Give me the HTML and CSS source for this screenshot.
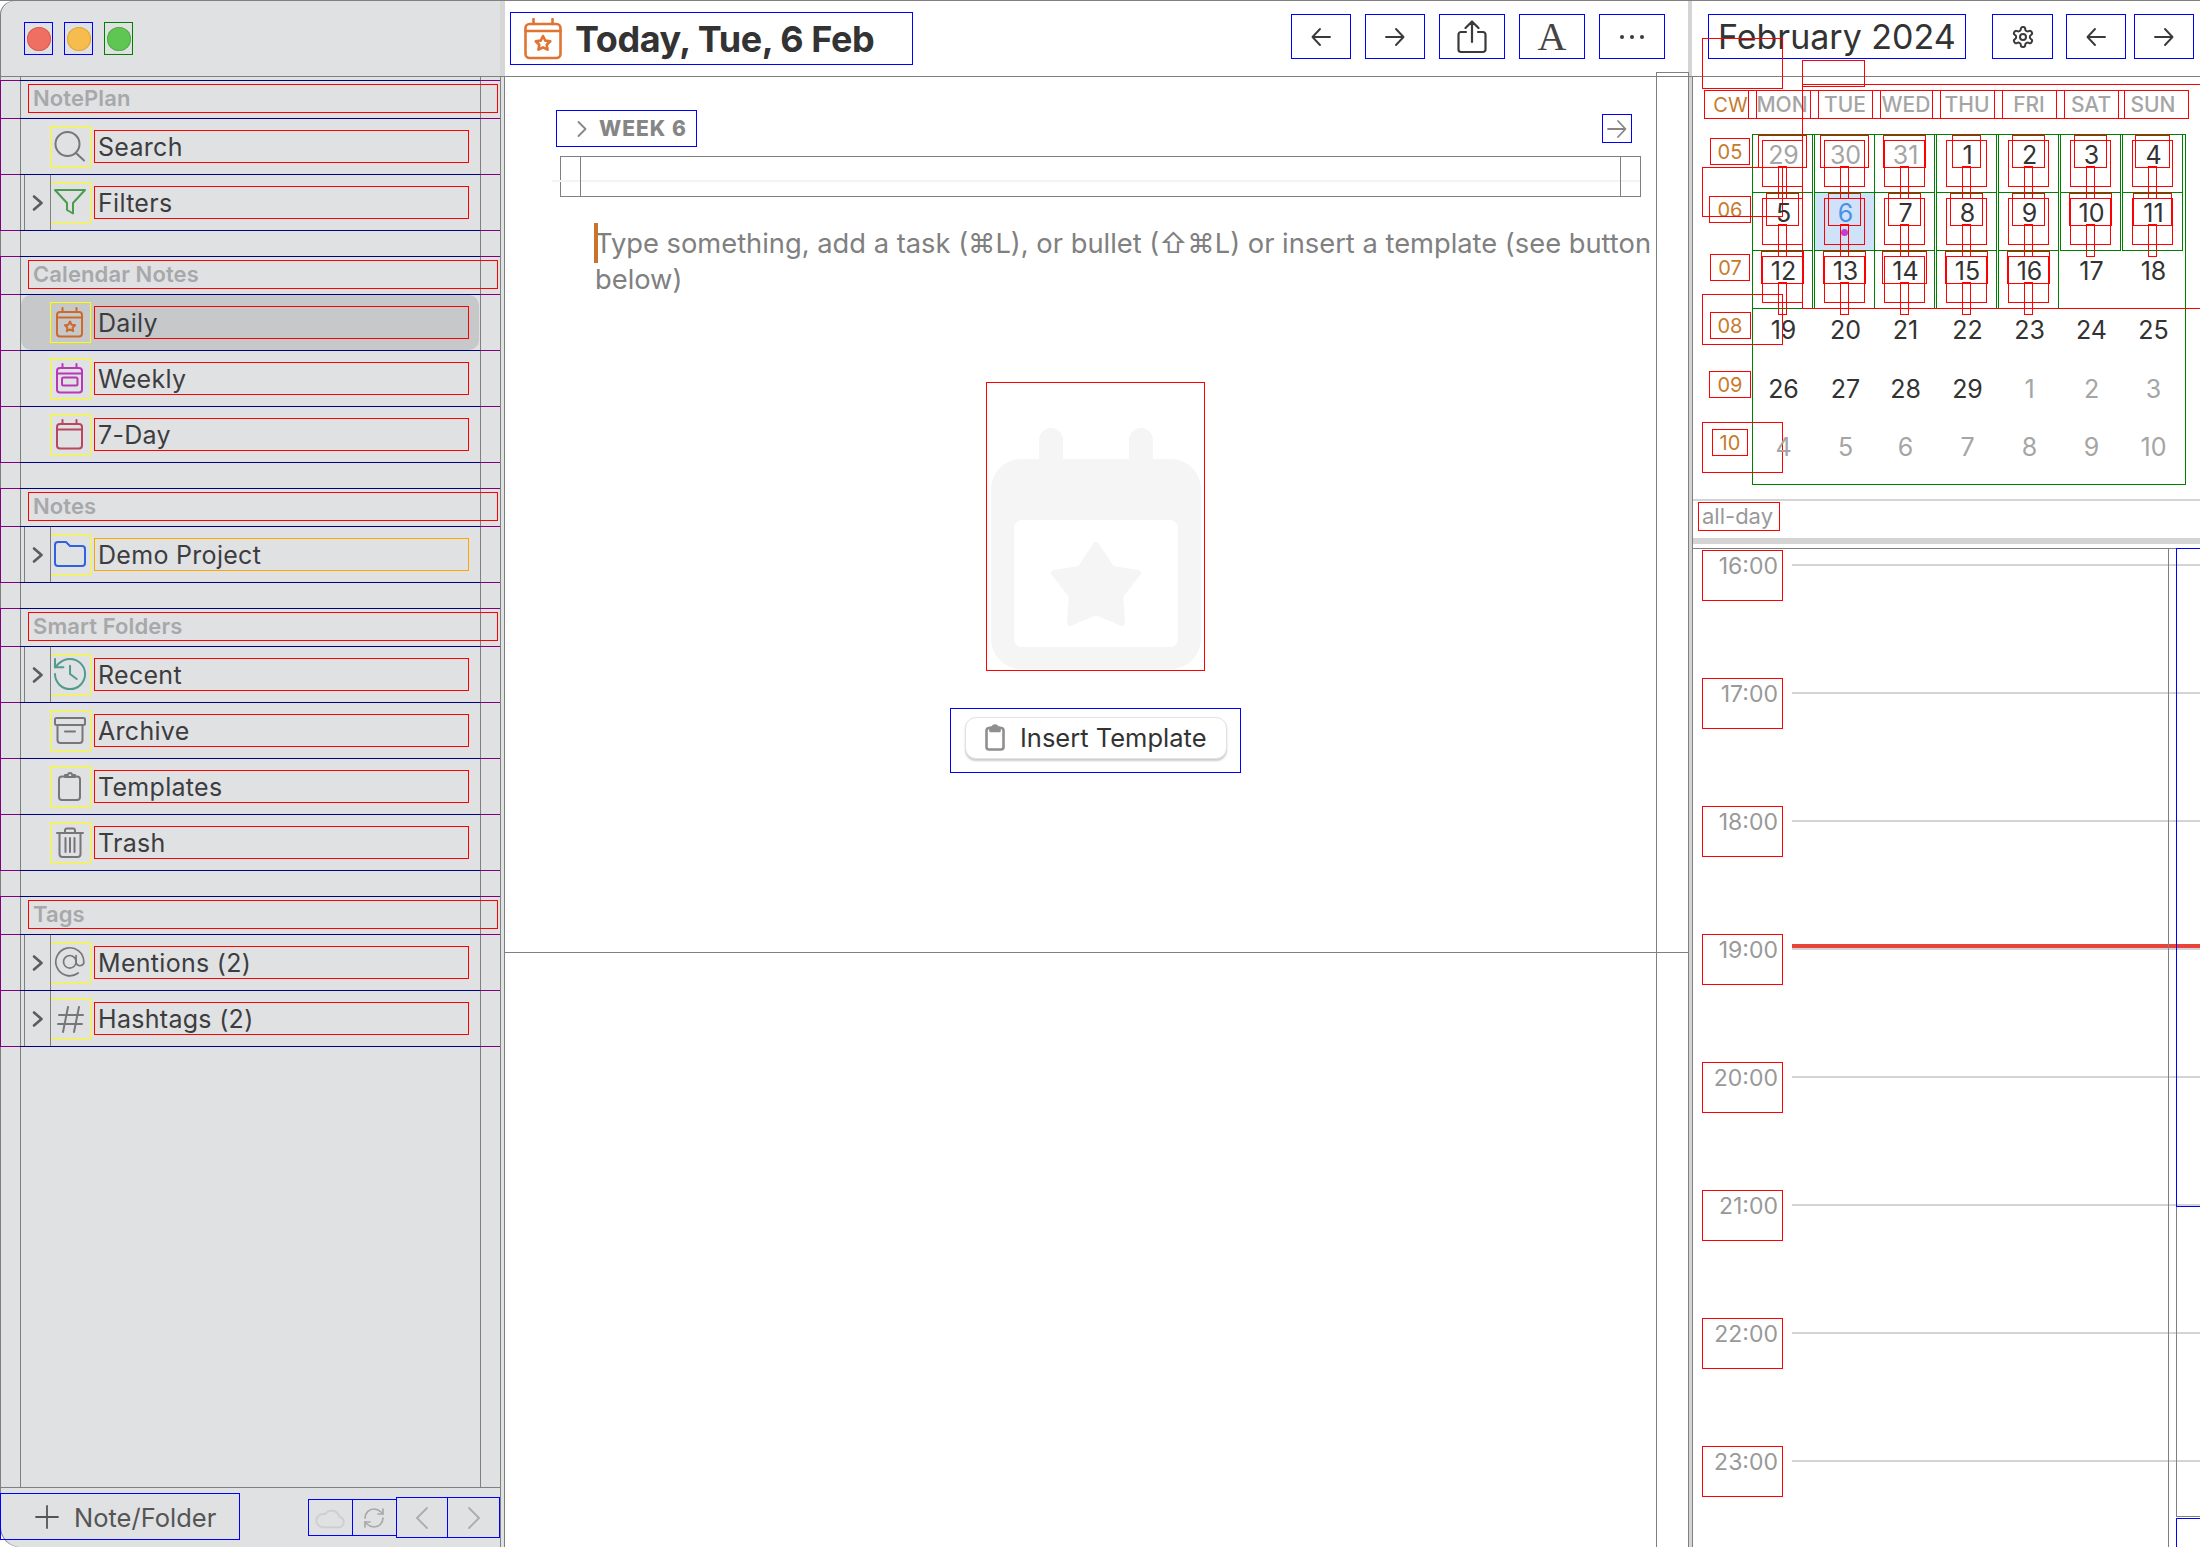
FILE: index.html
```html
<!DOCTYPE html>
<html lang="en">
<head>
  <meta charset="UTF-8">
  <title>NotePlan</title>
  <link rel="stylesheet" href="styles.css">
</head>
<body>
<div class="app">

  <!-- left column -->
  <aside class="sidebar">
    <div class="titlebar">
      <span class="light bb"><b class="red"></b></span>
      <span class="light bb"><b class="amber"></b></span>
      <span class="light gb"><b class="green"></b></span>
    </div>

    <div class="list">
      <div class="row sec"><div class="row-in"><div class="sec-label">NotePlan</div></div></div>
      <div class="row"><div class="row-in"><div class="row-body">
        <span class="chev off"></span>
        <span class="ic"><svg viewBox="0 0 41 41" class="grey"><circle cx="17.5" cy="18" r="12"/><path d="M26 27l8 7.5"/></svg></span>
        <span class="label">Search</span>
      </div></div></div>
      <div class="row"><div class="row-in"><div class="row-body">
        <span class="chev"><svg viewBox="0 0 12 16"><path d="M2 1.5L9.5 8L2 14.5"/></svg></span>
        <span class="ic"><svg viewBox="0 0 41 41" class="c-green"><path d="M5 8H35L23 21V31.5L17 28V21Z"/></svg></span>
        <span class="label">Filters</span>
      </div></div></div>
      <div class="gap"></div>

      <div class="row sec"><div class="row-in"><div class="sec-label">Calendar Notes</div></div></div>
      <div class="row"><div class="row-in"><div class="row-body selected">
        <span class="chev off"></span>
        <span class="ic"><svg viewBox="0 0 41 41" class="c-orange"><rect x="7" y="10" width="25" height="24.5" rx="3"/><path d="M7 15.5H32M12.5 6V10M26.5 6V10"/><path d="M20 19.5l1.6 3.2 3.5.5-2.5 2.4.6 3.5-3.2-1.7-3.2 1.7.6-3.5-2.5-2.4 3.5-.5z"/></svg></span>
        <span class="label">Daily</span>
      </div></div></div>
      <div class="row"><div class="row-in"><div class="row-body">
        <span class="chev off"></span>
        <span class="ic"><svg viewBox="0 0 41 41" class="c-purple"><rect x="7" y="10" width="25" height="24.5" rx="3"/><path d="M7 15.5H32M12.5 6V10M26.5 6V10"/><rect x="12" y="19.5" width="15.5" height="8" rx="1.5"/></svg></span>
        <span class="label">Weekly</span>
      </div></div></div>
      <div class="row"><div class="row-in"><div class="row-body">
        <span class="chev off"></span>
        <span class="ic"><svg viewBox="0 0 41 41" class="c-rose"><rect x="7" y="10" width="25" height="24.5" rx="3"/><path d="M7 15.5H32M12.5 6V10M26.5 6V10"/></svg></span>
        <span class="label">7-Day</span>
      </div></div></div>
      <div class="gap"></div>

      <div class="row sec"><div class="row-in"><div class="sec-label">Notes</div></div></div>
      <div class="row"><div class="row-in"><div class="row-body">
        <span class="chev"><svg viewBox="0 0 12 16"><path d="M2 1.5L9.5 8L2 14.5"/></svg></span>
        <span class="ic"><svg viewBox="0 0 41 41" class="c-blue"><path d="M5 11a3 3 0 0 1 3-3h8l4 4h12a3 3 0 0 1 3 3v14a3 3 0 0 1-3 3H8a3 3 0 0 1-3-3z"/></svg></span>
        <span class="label orange-box">Demo Project</span>
      </div></div></div>
      <div class="gap"></div>

      <div class="row sec"><div class="row-in"><div class="sec-label">Smart Folders</div></div></div>
      <div class="row"><div class="row-in"><div class="row-body">
        <span class="chev"><svg viewBox="0 0 12 16"><path d="M2 1.5L9.5 8L2 14.5"/></svg></span>
        <span class="ic"><svg viewBox="0 0 41 41" class="c-teal"><g transform="scale(1.67)"><path d="M3 12a9 9 0 1 0 9-9 9.75 9.75 0 0 0-6.74 2.74L3 8"/><path d="M3 3v5h5"/><path d="M12 7v5l4 3"/></g></svg></span>
        <span class="label">Recent</span>
      </div></div></div>
      <div class="row"><div class="row-in"><div class="row-body">
        <span class="chev off"></span>
        <span class="ic"><svg viewBox="0 0 41 41" class="grey"><rect x="5" y="8" width="30" height="7" rx="1.5"/><path d="M7.5 15V30a3 3 0 0 0 3 3h19a3 3 0 0 0 3-3V15M15 21.5H25"/></svg></span>
        <span class="label">Archive</span>
      </div></div></div>
      <div class="row"><div class="row-in"><div class="row-body">
        <span class="chev off"></span>
        <span class="ic"><svg viewBox="0 0 41 41" class="grey"><path d="M15 10.5h-3a3 3 0 0 0-3 3V31a3 3 0 0 0 3 3h15a3 3 0 0 0 3-3V13.5a3 3 0 0 0-3-3h-3"/><path d="M15 10.5V9h3a2 2 0 0 1 4 0h3v2H15z"/></svg></span>
        <span class="label">Templates</span>
      </div></div></div>
      <div class="row"><div class="row-in"><div class="row-body">
        <span class="chev off"></span>
        <span class="ic"><svg viewBox="0 0 41 41" class="grey"><path d="M7 11H33M15 11V8.5a2 2 0 0 1 2-2h6a2 2 0 0 1 2 2V11"/><path d="M9.5 11V32a3 3 0 0 0 3 3h15a3 3 0 0 0 3-3V11M15.5 16V30M20 16V30M24.5 16V30"/></svg></span>
        <span class="label">Trash</span>
      </div></div></div>
      <div class="gap"></div>

      <div class="row sec"><div class="row-in"><div class="sec-label">Tags</div></div></div>
      <div class="row"><div class="row-in"><div class="row-body">
        <span class="chev"><svg viewBox="0 0 12 16"><path d="M2 1.5L9.5 8L2 14.5"/></svg></span>
        <span class="ic"><svg viewBox="0 0 41 41" class="grey"><g transform="translate(3 3) scale(1.4)"><circle cx="12" cy="12" r="4.5"/><path d="M16.5 7.5v5.5a3 3 0 0 0 5.5 0v-1a10 10 0 1 0-4 8"/></g></svg></span>
        <span class="label">Mentions (2)</span>
      </div></div></div>
      <div class="row"><div class="row-in"><div class="row-body">
        <span class="chev"><svg viewBox="0 0 12 16"><path d="M2 1.5L9.5 8L2 14.5"/></svg></span>
        <span class="ic"><svg viewBox="0 0 41 41" class="grey"><path d="M18 9L13 34M29 9L24 34M9 17H33M8 26H32"/></svg></span>
        <span class="label">Hashtags (2)</span>
      </div></div></div>
    </div>

    <div class="side-foot">
      <div class="new-note">
        <svg viewBox="0 0 24 24" class="plus"><path d="M12 1V23M1 12H23"/></svg>
        <span>Note/Folder</span>
      </div>
      <div class="foot-btn f-cloud"><svg viewBox="0 0 24 24"><path d="M17.5 19H7a5 5 0 1 1 1.2-9.8A6 6 0 0 1 19 11a4 4 0 0 1-1.5 8z"/></svg></div>
      <div class="foot-btn f-sync"><svg viewBox="0 0 24 24"><path d="M3 12a9 9 0 0 1 9-9 9.75 9.75 0 0 1 6.74 2.74L21 8"/><path d="M21 3v5h-5"/><path d="M21 12a9 9 0 0 1-9 9 9.75 9.75 0 0 1-6.74-2.74L3 16"/><path d="M8 16H3v5"/></svg></div>
      <div class="foot-btn f-nav"><svg viewBox="0 0 14 24" class="nav-ic"><path d="M12 2L2 12L12 22"/></svg></div>
      <div class="foot-btn f-nav"><svg viewBox="0 0 14 24" class="nav-ic"><path d="M2 2L12 12L2 22"/></svg></div>
    </div>
  </aside>
  <div class="side-split"><div class="side-split-top"></div></div>

  <!-- note editor -->
  <main class="main">
    <div class="scroll-box"></div>
    <header class="main-head">
      <div class="title-box">
        <svg viewBox="0 0 38 42" class="title-ic"><rect x="1.5" y="6" width="35" height="34" rx="4"/><path d="M1.5 13H36.5M9.5 1V6M28.5 1V6"/><path d="M19 18l2.3 4.6 5 .7-3.6 3.4.9 5-4.6-2.4-4.6 2.4.9-5-3.6-3.4 5-.7z"/></svg>
        <h1>Today, Tue, 6 Feb</h1>
      </div>
      <div class="tools">
        <button class="tool w60"><svg viewBox="0 0 20 20"><path d="M19 10H2M9 2L1.5 10L9 18"/></svg></button>
        <button class="tool w60"><svg viewBox="0 0 20 20"><path d="M1 10H18M11 2L18.5 10L11 18"/></svg></button>
        <button class="tool w66"><svg viewBox="0 0 30 34" class="share"><path d="M9 12H4a2.500 2.500 0 0 0-2.500 2.500V29.500A2.500 2.500 0 0 0 4 32H26a2.500 2.500 0 0 0 2.500-2.500V14.500A2.500 2.500 0 0 0 26 12H21M15 22V2M8.500 8L15 1.500L21.500 8"/></svg></button>
        <button class="tool w66 font-a">A</button>
        <button class="tool w66"><svg viewBox="0 0 26 6" class="dots"><circle cx="3" cy="3" r="2"/><circle cx="13" cy="3" r="2"/><circle cx="23" cy="3" r="2"/></svg></button>
      </div>
    </header>

    <section class="note">
      <div class="week-row">
        <div class="week-box">
          <svg viewBox="0 0 10 16"><path d="M1.500 1L8.500 8L1.500 15"/></svg>
          <span>WEEK 6</span>
        </div>
        <div class="week-next"><svg viewBox="0 0 20 20"><path d="M1 10H18M11 2L18.500 10L11 18"/></svg></div>
      </div>
      <div class="week-body"><div class="week-inner"></div></div>

      <p class="editor">Type something, add a task (⌘L), or bullet (⇧⌘L) or insert a template (see button<br>below)</p>

      <div class="empty">
        <div class="empty-ic">
          <svg viewBox="0 0 219 288">
            <path class="pegs" d="M65 58V90M155 58V90"/>
            <rect class="cal-body" x="5" y="77" width="210" height="210" rx="30"/>
            <rect class="cal-win" x="28" y="138" width="164" height="127" rx="8"/>
            <path class="cal-star" d="M110 163L126 187L152 191L134 214L136 241L110 230L84 241L86 214L68 191L94 187Z"/>
          </svg>
        </div>
        <div class="insert-wrap">
          <button class="insert">
            <svg viewBox="0 0 20 27"><path d="M5.500 4H4a2.500 2.500 0 0 0-2.500 2.500V23A2.500 2.500 0 0 0 4 25.500H16a2.500 2.500 0 0 0 2.500-2.500V6.500A2.500 2.500 0 0 0 16 4H14.500"/><path class="clip" d="M5.500 7V3.500H8a2 2 0 0 1 4 0h2.500V7z"/></svg>
            <span>Insert Template</span>
          </button>
        </div>
      </div>
    </section>
  </main>
  <div class="main-split"></div>

  <!-- calendar -->
  <aside class="cal">
    <header class="cal-head">
      <div class="month-title">February 2024</div>
      <button class="tool gear"><svg viewBox="0 0 24 24"><path d="M12.220 2h-.44a2 2 0 0 0-2 2v.18a2 2 0 0 1-1 1.730l-.43.25a2 2 0 0 1-2 0l-.15-.08a2 2 0 0 0-2.730.73l-.22.38a2 2 0 0 0 .73 2.730l.15.1a2 2 0 0 1 1 1.720v.51a2 2 0 0 1-1 1.740l-.15.09a2 2 0 0 0-.73 2.730l.22.38a2 2 0 0 0 2.730.73l.15-.08a2 2 0 0 1 2 0l.43.25a2 2 0 0 1 1 1.730V20a2 2 0 0 0 2 2h.44a2 2 0 0 0 2-2v-.18a2 2 0 0 1 1-1.730l.43-.25a2 2 0 0 1 2 0l.15.08a2 2 0 0 0 2.730-.73l.22-.39a2 2 0 0 0-.73-2.730l-.15-.08a2 2 0 0 1-1-1.740v-.5a2 2 0 0 1 1-1.740l.15-.09a2 2 0 0 0 .73-2.730l-.22-.38a2 2 0 0 0-2.730-.73l-.15.08a2 2 0 0 1-2 0l-.43-.25a2 2 0 0 1-1-1.730V4a2 2 0 0 0-2-2z"/><circle cx="12" cy="12" r="3"/></svg></button>
      <button class="tool c-prev"><svg viewBox="0 0 20 20"><path d="M19 10H2M9 2L1.500 10L9 18"/></svg></button>
      <button class="tool c-next"><svg viewBox="0 0 20 20"><path d="M1 10H18M11 2L18.500 10L11 18"/></svg></button>
    </header>

    <div class="cal-body-wrap">
      <div class="wd-row">
        <span class="wd cw">CW</span>
        <span class="wd mon">MON</span>
        <span class="wd">TUE</span>
        <span class="wd nar">WED</span>
        <span class="wd">THU</span>
        <span class="wd">FRI</span>
        <span class="wd">SAT</span>
        <span class="wd sun">SUN</span>
      </div>

      <div class="month">
        <div class="wk-col">
          <div class="wk-cell"><span class="wk">05</span></div>
          <div class="wk-cell"><span class="wk">06</span></div>
          <div class="wk-cell"><span class="wk">07</span></div>
          <div class="wk-cell low"><span class="wk">08</span></div>
          <div class="wk-cell low"><span class="wk">09</span></div>
          <div class="wk-cell low"><span class="wk">10</span></div>
        </div>
        <div class="grid">
          <div class="gr-row">
            <div class="cell boxed"><span class="num muted">29</span><i class="wrap"></i><i class="stem"></i></div>
            <div class="cell boxed"><span class="num muted">30</span><i class="wrap"></i><i class="stem"></i></div>
            <div class="cell boxed"><span class="num muted">31</span><i class="wrap"></i><i class="stem"></i></div>
            <div class="cell boxed"><span class="num">1</span><i class="wrap"></i><i class="stem"></i></div>
            <div class="cell boxed"><span class="num">2</span><i class="wrap"></i><i class="stem"></i></div>
            <div class="cell boxed"><span class="num">3</span><i class="wrap"></i><i class="stem"></i></div>
            <div class="cell boxed"><span class="num">4</span><i class="wrap"></i><i class="stem"></i></div>
          </div>
          <div class="gr-row">
            <div class="cell boxed"><span class="num">5</span><i class="wrap"></i><i class="stem"></i></div>
            <div class="cell boxed today"><span class="num">6</span><i class="wrap"></i><i class="stem"></i><b class="dot"></b></div>
            <div class="cell boxed"><span class="num">7</span><i class="wrap"></i><i class="stem"></i></div>
            <div class="cell boxed"><span class="num">8</span><i class="wrap"></i><i class="stem"></i></div>
            <div class="cell boxed"><span class="num">9</span><i class="wrap"></i><i class="stem"></i></div>
            <div class="cell boxed"><span class="num">10</span><i class="wrap"></i><i class="stem"></i></div>
            <div class="cell boxed"><span class="num">11</span><i class="wrap"></i><i class="stem"></i></div>
          </div>
          <div class="gr-row">
            <div class="cell boxed"><span class="num">12</span><i class="wrap"></i><i class="stem"></i></div>
            <div class="cell boxed"><span class="num">13</span><i class="wrap"></i><i class="stem"></i></div>
            <div class="cell boxed"><span class="num">14</span><i class="wrap"></i><i class="stem"></i></div>
            <div class="cell boxed"><span class="num">15</span><i class="wrap"></i><i class="stem"></i></div>
            <div class="cell boxed"><span class="num">16</span><i class="wrap"></i><i class="stem"></i></div>
            <div class="cell"><span class="num">17</span></div>
            <div class="cell"><span class="num">18</span></div>
          </div>
          <div class="gr-row low">
            <div class="cell"><span class="num">19</span></div>
            <div class="cell"><span class="num">20</span></div>
            <div class="cell"><span class="num">21</span></div>
            <div class="cell"><span class="num">22</span></div>
            <div class="cell"><span class="num">23</span></div>
            <div class="cell"><span class="num">24</span></div>
            <div class="cell"><span class="num">25</span></div>
          </div>
          <div class="gr-row low">
            <div class="cell"><span class="num">26</span></div>
            <div class="cell"><span class="num">27</span></div>
            <div class="cell"><span class="num">28</span></div>
            <div class="cell"><span class="num">29</span></div>
            <div class="cell"><span class="num muted">1</span></div>
            <div class="cell"><span class="num muted">2</span></div>
            <div class="cell"><span class="num muted">3</span></div>
          </div>
          <div class="gr-row low">
            <div class="cell"><span class="num muted">4</span></div>
            <div class="cell"><span class="num muted">5</span></div>
            <div class="cell"><span class="num muted">6</span></div>
            <div class="cell"><span class="num muted">7</span></div>
            <div class="cell"><span class="num muted">8</span></div>
            <div class="cell"><span class="num muted">9</span></div>
            <div class="cell"><span class="num muted">10</span></div>
          </div>
        </div>
      </div>

      <div class="allday"><span>all-day</span></div>

      <div class="timeline">
        <div class="hour"><span class="time">16:00</span><span class="h-line"></span></div>
        <div class="hour"><span class="time">17:00</span><span class="h-line"></span></div>
        <div class="hour"><span class="time">18:00</span><span class="h-line"></span></div>
        <div class="hour"><span class="time">19:00</span><span class="h-line now"></span></div>
        <div class="hour"><span class="time">20:00</span><span class="h-line"></span></div>
        <div class="hour"><span class="time">21:00</span><span class="h-line"></span></div>
        <div class="hour"><span class="time">22:00</span><span class="h-line"></span></div>
        <div class="hour"><span class="time">23:00</span><span class="h-line"></span></div>
        <div class="tl-gutter"></div>
        <div class="tl-blue"></div>
        <div class="tl-grey"></div>
        <div class="tl-blue2"></div>
      </div>
    </div>

    <!-- layout outlines lying over the calendar -->
    <i class="ov ov-a"></i>
    <i class="ov ov-b"></i>
    <i class="ov ov-c"></i>
    <i class="ov ov-d"></i>
    <i class="ov ov-e"></i>
    <i class="ov ov-f"></i>
    <div class="wd-over"><i></i><i></i><i></i><i></i><i></i></div>
  </aside>
</div>
</body>
</html>
```

FILE: styles.css
```css
* {
  box-sizing: border-box;
  margin: 0;
  padding: 0;
}

html, body {
  width: 2200px;
  height: 1548px;
  overflow: hidden;
  background: #fff;
  font-family: Inter, "Noto Sans", sans-serif;
  color: #333;
}

button {
  background: none;
  font: inherit;
  color: inherit;
}

svg {
  display: block;
  fill: none;
  stroke-linecap: round;
  stroke-linejoin: round;
}

.app {
  display: flex;
  width: 2200px;
  height: 1548px;
  border-top: 2px solid #808080;
  margin-top: -1px;
  overflow: hidden;
}

/* sidebar */
.sidebar {
  width: 500px;
  display: flex;
  flex-direction: column;
  background: #e0e1e3;
  border-radius: 14px 0 0 20px;
  box-shadow: inset 1px 0 0 #808080;
}

.titlebar {
  height: 76px;
  flex: none;
  display: flex;
  padding: 21px 0 0 24px;
  gap: 11px;
  border-bottom: 1px solid #808080;
}

.light {
  width: 29px;
  height: 33px;
  display: flex;
  align-items: center;
  justify-content: center;
  border: 1px solid #00f;
}

.light.gb { border-color: #008000; }

.light b {
  width: 24px;
  height: 24px;
  border-radius: 50%;
}

.red { background: #ef6f63; box-shadow: inset 0 0 0 1px #dc5c52; }
.amber { background: #f6bd4e; box-shadow: inset 0 0 0 1px #dfa63c; }
.green { background: #60c653; box-shadow: inset 0 0 0 1px #52ae47; }

.list {
  flex: 1;
  padding-top: 3px;
  background:
    linear-gradient(#808080, #808080) 20px 0 / 1px 100% no-repeat,
    linear-gradient(#808080, #808080) 480px 0 / 1px 100% no-repeat;
}

.row {
  height: 57px;
  margin-bottom: -1px;
  border: solid #800080;
  border-width: 1px 0 1px 1px;
}

.row.sec { height: 39px; }

.row-in {
  height: calc(100% + 2px);
  margin: -1px 20px -1px 19px;
  border-top: 1px solid #000080;
  border-bottom: 1px solid #000080;
}

.row-body {
  display: flex;
  align-items: center;
  height: 100%;
  margin: 0 1px;
  padding-left: 3px;
  border-radius: 10px;
}

.row-body.selected { background: #c7c8ca; }

.gap { height: 26px; }

.sec-label {
  width: 470px;
  height: 29px;
  margin: 3px 0 0 8px;
  padding-left: 4px;
  border: 1px solid #f00;
  font-size: 22px;
  font-weight: 600;
  line-height: 27px;
  letter-spacing: 0.1px;
  color: #a7a8aa;
}

.chev {
  position: relative;
  z-index: 1;
  flex: none;
  align-self: stretch;
  width: 27px;
  display: flex;
  align-items: center;
  justify-content: center;
  border-left: 1px solid #808080;
  border-right: 1px solid #808080;
}

.chev.off { border-color: transparent; }

.chev svg {
  width: 12px;
  height: 16px;
  stroke: #5c5c5e;
  stroke-width: 2.6;
}

.ic {
  flex: none;
  width: 41px;
  height: 41px;
  margin-left: -1px;
  border: 1px solid #ff0;
}

.ic svg {
  width: 41px;
  height: 41px;
  margin: -1px;
  stroke-width: 2;
}

.grey { stroke: #77777a; }
.c-green { stroke: #4c9c50; }
.c-orange { stroke: #cc6a2d; }
.c-purple { stroke: #b937b9; }
.c-rose { stroke: #b8475f; }
.c-blue { stroke: #2f62e0; }
.c-teal { stroke: #4f9b8c; }

.ic g { stroke-width: 1.2; }

.label {
  flex: none;
  width: 375px;
  height: 33px;
  margin-left: 3px;
  padding-left: 3px;
  border: 1px solid #f00;
  font-size: 25px;
  line-height: 32px;
  letter-spacing: 0.3px;
  color: #3d3d3f;
  white-space: nowrap;
}

.orange-box { border-color: #ffa500; }

.side-foot {
  height: 60px;
  flex: none;
  display: flex;
  padding-top: 5px;
  border-top: 1px solid #808080;
}

.new-note {
  width: 241px;
  height: 47px;
  display: flex;
  align-items: center;
  padding: 1px 0 0 34px;
  border: 1px solid #00f;
  font-size: 25.5px;
  color: #555;
}

.plus {
  width: 24px;
  height: 24px;
  margin-right: 15px;
  stroke: #555;
  stroke-width: 1.8;
}

.foot-btn {
  height: 37px;
  margin-top: 6px;
  display: flex;
  align-items: center;
  justify-content: center;
  border: 1px solid #00f;
}

.foot-btn svg { stroke-width: 1.8; }

.f-cloud {
  width: 45px;
  margin-left: 68px;
}

.f-cloud svg {
  width: 32px;
  height: 32px;
  stroke: #cfcfd1;
  stroke-width: 1.5;
}

.f-sync {
  width: 45px;
  margin-left: -1px;
}

.f-sync svg {
  width: 24px;
  height: 24px;
  stroke: #a9a9ab;
  stroke-width: 1.7;
}

.f-nav {
  width: 53px;
  height: 41px;
  margin-top: 4px;
  margin-left: -1px;
}

.nav-ic {
  width: 14px;
  height: 24px;
  stroke: #acacae;
  stroke-width: 3;
}

.side-split {
  width: 5px;
  flex: none;
  background: #e0e1e3;
  border-left: 1px solid #808080;
  border-right: 1px solid #808080;
}

.side-split-top {
  height: 75px;
  margin: 0 -1px;
  background: #d6d6d6;
}

/* main */
.main {
  position: relative;
  width: 1183px;
  flex: none;
}

.scroll-box {
  position: absolute;
  top: 71px;
  left: 1151px;
  right: -1px;
  bottom: 0;
  border: 1px solid #808080;
  border-bottom: 0;
}

.main-head {
  height: 76px;
  display: flex;
  margin-left: -5px;
  width: 1188px;
  border-bottom: 1px solid #808080;
}

.title-box {
  width: 403px;
  height: 53px;
  margin: 11px 0 0 10px;
  display: flex;
  align-items: center;
  padding-left: 13px;
  border: 1px solid #00f;
}

.title-ic {
  width: 38px;
  height: 42px;
  stroke: #e07433;
  stroke-width: 2.6;
}

.title-box h1 {
  margin-left: 13px;
  font-size: 36px;
  font-weight: 700;
  white-space: nowrap;
  letter-spacing: -0.45px;
}

.tools {
  display: flex;
  gap: 14px;
  margin: 13px 0 0 auto;
  padding-right: 23px;
}

.tool {
  height: 45px;
  display: flex;
  align-items: center;
  justify-content: center;
  border: 1px solid #00f;
}

.tool svg {
  width: 20px;
  height: 20px;
  stroke: #3a3a3a;
  stroke-width: 1.9;
}

.w60 { width: 60px; }
.w66 { width: 66px; }

.tool .share {
  width: 30px;
  height: 34px;
  stroke-width: 2.2;
}

.tool .dots {
  width: 26px;
  height: 6px;
  fill: #3a3a3a;
  stroke: none;
}

.font-a {
  font-family: "Liberation Serif", serif;
  font-size: 40px;
  line-height: 1;
  color: #444;
}

.note {
  height: 876px;
  padding-top: 33px;
  border-bottom: 1px solid #808080;
}

.week-row {
  display: flex;
  justify-content: space-between;
  align-items: flex-start;
  padding: 0 56px 0 51px;
}

.week-box {
  width: 141px;
  height: 37px;
  display: flex;
  align-items: center;
  padding-left: 20px;
  border: 1px solid #00f;
  color: #868686;
  font-size: 21px;
  font-weight: 800;
  letter-spacing: 1px;
}

.week-box svg {
  width: 10px;
  height: 16px;
  margin-right: 12px;
  stroke: #868686;
  stroke-width: 1.8;
}

.week-next {
  width: 30px;
  height: 29px;
  margin-top: 4px;
  display: flex;
  align-items: center;
  justify-content: center;
  border: 1px solid #00f;
}

.week-next svg {
  width: 20px;
  height: 20px;
  stroke: #868686;
  stroke-width: 1.8;
}

.week-body {
  position: relative;
  width: 1081px;
  height: 41px;
  margin: 9px 0 0 55px;
  border: 1px solid #808080;
}

.week-body::before {
  content: "";
  position: absolute;
  left: -9px;
  right: 0;
  top: 23px;
  height: 2px;
  background: #f3f3f3;
}

.week-inner {
  position: relative;
  height: 100%;
  margin: 0 19px;
  border-left: 1px solid #808080;
  border-right: 1px solid #808080;
}

.editor {
  position: relative;
  margin: 29px 0 0 90px;
  font-size: 27.3px;
  line-height: 36px;
  color: #808080;
  white-space: nowrap;
}

.editor::before {
  content: "";
  position: absolute;
  left: -1px;
  top: -3px;
  width: 4px;
  height: 40px;
  background: #c8742c;
}

.empty {
  display: flex;
  flex-direction: column;
  align-items: center;
  padding-right: 2px;
  margin-top: 84px;
}

.empty-ic {
  width: 219px;
  height: 289px;
  border: 1px solid #f00;
}

.empty-ic svg {
  width: 219px;
  height: 288px;
  margin: -1px;
}

.cal-body { fill: #f5f5f5; }
.cal-win { fill: #fff; }

.pegs {
  stroke: #f5f5f5;
  stroke-width: 24;
}

.cal-star {
  fill: #f5f5f5;
  stroke: #f5f5f5;
  stroke-width: 6;
}

.insert-wrap {
  width: 291px;
  height: 65px;
  margin-top: 37px;
  padding: 8px 0 0 14px;
  border: 1px solid #00f;
}

.insert {
  width: 262px;
  height: 42px;
  display: flex;
  align-items: center;
  padding: 0 0 2px 19px;
  border: 1px solid #e2e2e2;
  border-radius: 11px;
  background: #fff;
  box-shadow: 0 2px 2px rgba(0, 0, 0, 0.2);
  font-size: 25.5px;
}

.insert svg {
  width: 20px;
  height: 27px;
  margin-right: 15px;
  stroke: #8f8f8f;
  stroke-width: 2.6;
}

.clip { fill: #8f8f8f; }

.main-split {
  width: 4px;
  flex: none;
  background: #d4d4d4;
}

/* calendar */
.cal {
  position: relative;
  width: 508px;
  flex: none;
}

.cal-head {
  height: 76px;
  display: flex;
  padding: 13px 0 0 20px;
  margin-left: -4px;
  width: 512px;
  border-bottom: 1px solid #808080;
}

.month-title {
  width: 258px;
  height: 45px;
  padding-left: 9px;
  border: 1px solid #00f;
  font-size: 34px;
  line-height: 44px;
  white-space: nowrap;
}

.gear {
  width: 61px;
  margin-left: 26px;
}

.gear svg {
  width: 24px;
  height: 24px;
  stroke-width: 2;
}

.c-prev {
  width: 60px;
  margin-left: 13px;
}

.c-next {
  width: 60px;
  margin-left: 8px;
}

.cal-body-wrap {
  height: 1472px;
  border-left: 1px solid #808080;
  padding-top: 13px;
}

.wd-row {
  display: flex;
  height: 29px;
  padding-left: 11px;
  color: #a5a5a5;
  font-size: 21px;
  font-weight: 500;
}

.wd {
  width: 63px;
  margin-left: -1px;
  padding-left: 7px;
  border: 1px solid #f00;
  text-align: center;
  line-height: 28px;
  white-space: nowrap;
}

.wd.nar { width: 61px; }

.wd.cw {
  width: 53px;
  margin: 0;
  padding: 0;
  font-weight: 400;
  font-size: 20px;
  color: #c87a2c;
}

.wd.mon {
  margin-left: -9px;
  padding-left: 5px;
}

.wd.sun {
  width: 65px;
  margin-left: 5px;
  padding: 0 7px 0 0;
}

.month {
  display: flex;
  margin-top: 15px;
}

.wk-col {
  width: 59px;
  padding-left: 15px;
}

.wk-cell {
  height: 58px;
  display: flex;
  justify-content: center;
  align-items: flex-start;
  padding-top: 4px;
}

.wk-cell.low { height: 58.5px; }

.wk {
  height: 27px;
  padding: 0 7px;
  border: 1px solid #f00;
  color: #c87a2c;
  font-size: 20px;
  line-height: 26px;
}

.grid {
  width: 434px;
  height: 351px;
  border: 1px solid #008000;
}

.gr-row {
  display: flex;
  height: 59px;
  margin-bottom: -1px;
}

.gr-row:first-child { margin-top: -1px; }
.gr-row.low { height: 59.5px; }

.cell {
  position: relative;
  width: 61px;
  height: 100%;
  margin-left: 1px;
  display: flex;
  justify-content: center;
  border: 1px solid transparent;
}

.cell:first-child { margin-left: -1px; }
.cell:nth-child(3) { margin-left: -1px; }

.cell.boxed { border-color: #008000; }

.num {
  position: relative;
  z-index: 1;
  height: 33px;
  padding: 0 7px 0 9px;
  border: 1px solid transparent;
  font-size: 25px;
  line-height: 38px;
  color: #333;
}

.low .num { line-height: 41px; }

.num.muted { color: #a5a5a5; }
.boxed .num { border-color: #f00; }

.wrap {
  position: absolute;
  z-index: 2;
  left: 9px;
  top: 5px;
  width: 41px;
  height: 47px;
  border: 1px solid #f00;
}

.stem {
  position: absolute;
  z-index: 2;
  left: 25px;
  top: 31px;
  width: 9px;
  height: 33px;
  border: 1px solid #f00;
}

.today { background: #cfe2fa; }
.today .num { color: #4a90e8; }

.dot {
  position: absolute;
  z-index: 3;
  left: 26px;
  top: 36px;
  width: 7px;
  height: 7px;
  border-radius: 50%;
  background: #c23ccf;
}

.allday {
  height: 45px;
  margin-top: 14px;
  padding: 1px 0 0 5px;
  border-top: 2px solid #d4d4d4;
  border-bottom: 6px solid #d4d4d4;
}

.allday span {
  display: block;
  width: 82px;
  height: 29px;
  padding-left: 3px;
  border: 1px solid #f00;
  color: #999;
  font-size: 22px;
  line-height: 27px;
}

.timeline {
  position: relative;
  margin-top: 4px;
  padding-top: 1px;
  border-top: 1px solid #808080;
}

.hour {
  display: flex;
  height: 128px;
}

.time {
  flex: none;
  width: 81px;
  height: 51px;
  margin-left: 9px;
  padding: 0 4px 0 0;
  border: 1px solid #f00;
  text-align: right;
  color: #999;
  font-size: 23px;
  line-height: 30px;
}

.h-line {
  flex: 1;
  height: 2px;
  margin: 14px 0 0 9px;
  background: #d4d4d4;
}

.h-line.now { box-shadow: 0 -2px 0 #e9443c, 0 -4px 0 #e9443c; }

.tl-gutter {
  position: absolute;
  left: 475px;
  top: -1px;
  bottom: 0;
  border-left: 1px solid #808080;
}

.tl-blue {
  position: absolute;
  left: 483px;
  right: -10px;
  top: -1px;
  height: 659px;
  border: 1px solid #00f;
}

.tl-grey {
  position: absolute;
  left: 483px;
  right: -10px;
  top: 658px;
  height: 310px;
  border: 1px solid #808080;
  border-top: 0;
}

.tl-blue2 {
  position: absolute;
  left: 483px;
  right: -10px;
  top: 969px;
  height: 60px;
  border: 1px solid #00f;
}

/* outlines that do not belong to any box in the flow */
.ov {
  position: absolute;
  border: 1px solid #f00;
}

.ov-a { left: 10px; top: 37px; width: 81px; height: 51px; }
.ov-b { left: 110px; top: 59px; width: 63px; height: 27px; }
.ov-c { left: 110px; top: 83px; width: 420px; height: 225px; }
.ov-d { left: 10px; top: 166px; width: 81px; height: 50px; }
.ov-e { left: 10px; top: 293px; width: 81px; height: 51px; }
.ov-f { left: 10px; top: 421px; width: 81px; height: 51px; }

.wd-over {
  position: absolute;
  left: 126px;
  top: 89px;
  display: flex;
}

.wd-over i {
  width: 63px;
  height: 29px;
  margin-right: -1px;
  border: 1px solid #f00;
}

.wd-over i:nth-child(2) { width: 61px; }
.wd-over i:nth-child(5) { width: 61px; }
```
